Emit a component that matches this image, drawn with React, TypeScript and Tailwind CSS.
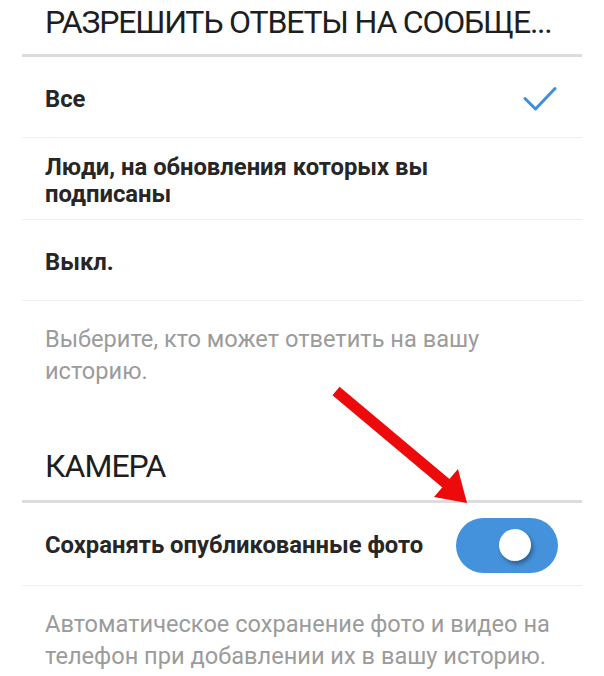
import { useState } from 'react';

function Check() {
  return (
    <svg width="34" height="26" viewBox="0 0 34 26" fill="none">
      <path d="M2 12.5 L12.5 23 L32 2.5" stroke="#3f8fdb" strokeWidth="3" strokeLinecap="round" strokeLinejoin="round" />
    </svg>
  );
}

function Toggle({ on, onClick }: { on: boolean; onClick: () => void }) {
  return (
    <button
      onClick={onClick}
      className={`relative w-[102px] h-[55px] rounded-full shrink-0 ${on ? 'bg-[#4592dc]' : 'bg-[#cfcfcf]'}`}
    >
      <span
        className={`absolute top-[11.5px] w-[32px] h-[32px] rounded-full bg-white shadow-[2px_3px_4px_rgba(0,0,0,0.35)] ${on ? 'right-[27px]' : 'left-[27px]'}`}
      />
    </button>
  );
}

export default function App() {
  const [choice, setChoice] = useState<'all' | 'following' | 'off'>('all');
  const [saveOn, setSaveOn] = useState(true);

  const rowText = "text-[23.8px] font-bold text-[#262626] leading-[27px]";

  return (
    <div className="relative w-[604px] h-[676px] bg-white overflow-hidden font-['Roboto',sans-serif]">
      <div className="px-[22px]">
        <h2 className="pl-[23px] pt-[3px] text-[32px] leading-[38px] tracking-[-1.2px] text-[#1e1e1e] whitespace-nowrap">
          РАЗРЕШИТЬ ОТВЕТЫ НА СООБЩЕ...
        </h2>
        <div className="mt-[13px] h-[3px] bg-[#dcdcdc]" />

        <div
          onClick={() => setChoice('all')}
          className="h-[81px] pt-[4px] pl-[23px] pr-[25px] flex items-center justify-between border-b border-[#efefef]"
        >
          <span className={rowText}>Все</span>
          {choice === 'all' && <Check />}
        </div>
        <div
          onClick={() => setChoice('following')}
          className="h-[82px] pt-[4px] pl-[23px] pr-[25px] flex items-center justify-between border-b border-[#efefef]"
        >
          <span className={`${rowText} w-[400px]`}>Люди, на обновления которых вы подписаны</span>
          {choice === 'following' && <Check />}
        </div>
        <div
          onClick={() => setChoice('off')}
          className="h-[81px] pt-[4px] pl-[23px] pr-[25px] flex items-center justify-between border-b border-[#efefef]"
        >
          <span className={rowText}>Выкл.</span>
          {choice === 'off' && <Check />}
        </div>

        <p className="pl-[23px] pr-[60px] pt-[22px] text-[23.6px] leading-[32px] text-[#9b9b9b]">
          Выберите, кто может ответить на вашу историю.
        </p>

        <h2 className="mt-[60px] pl-[23px] text-[32px] leading-[38px] tracking-[-1px] text-[#1e1e1e]">КАМЕРА</h2>
        <div className="mt-[15px] h-[3px] bg-[#dcdcdc]" />

        <div className="h-[83px] pt-[2px] pl-[23px] pr-[24px] flex items-center justify-between border-b border-[#efefef]">
          <span className={rowText}>Сохранять опубликованные фото</span>
          <Toggle on={saveOn} onClick={() => setSaveOn(!saveOn)} />
        </div>

        <p className="pl-[23px] pr-[10px] pt-[22px] text-[23.6px] leading-[32px] text-[#9b9b9b]">
          Автоматическое сохранение фото и видео на телефон при добавлении их в вашу историю.
        </p>
      </div>

      {/* red annotation arrow */}
      <svg className="absolute left-0 top-0 pointer-events-none" width="604" height="676">
        <line x1="336" y1="391" x2="448" y2="485" stroke="#ec0a0a" strokeWidth="11" />
        <polygon points="467,503 434,497 458,469" fill="#ec0a0a" />
      </svg>
    </div>
  );
}
